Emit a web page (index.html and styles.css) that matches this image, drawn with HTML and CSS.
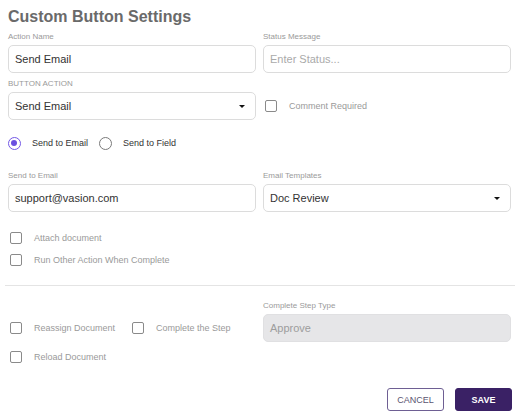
FILE: index.html
```html
<!DOCTYPE html>
<html>
<head>
<meta charset="utf-8">
<link rel="stylesheet" href="styles.css">
</head>
<body>
<div class="page">
  <h1 class="title">Custom Button Settings</h1>

  <div class="row row-first">
    <div class="field">
      <div class="label">Action Name</div>
      <div class="input">Send Email</div>
    </div>
    <div class="field">
      <div class="label">Status Message</div>
      <div class="input placeholder">Enter Status...</div>
    </div>
  </div>

  <div class="row row-second">
    <div class="field">
      <div class="label">BUTTON ACTION</div>
      <div class="input select">Send Email<span class="caret"></span></div>
    </div>
    <div class="field field-offset">
      <div class="check-line">
        <span class="box"></span><span class="check-text">Comment Required</span>
      </div>
    </div>
  </div>

  <div class="radios">
    <span class="radio on"></span><span class="radio-text">Send to Email</span>
    <span class="radio"></span><span class="radio-text">Send to Field</span>
  </div>

  <div class="row row-third">
    <div class="field">
      <div class="label">Send to Email</div>
      <div class="input">support@vasion.com</div>
    </div>
    <div class="field">
      <div class="label">Email Templates</div>
      <div class="input select">Doc Review<span class="caret"></span></div>
    </div>
  </div>

  <div class="checks">
    <div class="check-row"><span class="box"></span><span class="check-text">Attach document</span></div>
    <div class="check-row"><span class="box"></span><span class="check-text">Run Other Action When Complete</span></div>
  </div>

  <div class="divider"></div>

  <div class="row row-bottom">
    <div class="bottom-left">
      <div class="check-row">
        <span class="box"></span><span class="check-text">Reassign Document</span>
        <span class="box box-gap"></span><span class="check-text">Complete the Step</span>
      </div>
      <div class="check-row reload"><span class="box"></span><span class="check-text">Reload Document</span></div>
    </div>
    <div class="field">
      <div class="label">Complete Step Type</div>
      <div class="input disabled">Approve</div>
    </div>
  </div>

  <div class="actions">
    <button class="btn btn-cancel">CANCEL</button>
    <button class="btn btn-save">SAVE</button>
  </div>
</div>
</body>
</html>
```

FILE: styles.css
```css
* { box-sizing: border-box; }
html, body { margin: 0; padding: 0; background: #fff; }
body { font-family: "Liberation Sans", Arial, sans-serif; color: #333; }

.page {
  width: 520px;
  height: 417px;
  padding: 7px 9px 0 8px;
}

.title {
  margin: 0;
  font-size: 16px;
  line-height: 20px;
  font-weight: bold;
  color: #6a6a6a;
}

.row {
  display: grid;
  grid-template-columns: 248px 248px;
  column-gap: 7px;
}
.row-first { margin-top: 5px; }
.row-second { margin-top: 6px; }
.row-third { margin-top: 21px; }

.label {
  font-size: 8px;
  line-height: 10px;
  color: #9a9a9a;
  margin-bottom: 3px;
}

.input {
  height: 28px;
  border: 1px solid #dcdcdc;
  border-radius: 5px;
  padding: 0 6px;
  font-size: 11px;
  line-height: 26px;
  color: #333;
  position: relative;
}
.placeholder { color: #aaa; }
.disabled { background: #e6e6e8; color: #9d9d9d; border-color: #e0e0e2; }

.caret {
  position: absolute;
  right: 10px;
  top: 12px;
  width: 0;
  height: 0;
  border-left: 3px solid transparent;
  border-right: 3px solid transparent;
  border-top: 3px solid #111;
}

.field-offset { padding-top: 13px; }
.check-line {
  height: 28px;
  display: flex;
  align-items: center;
  padding-left: 2px;
}

.box {
  display: inline-block;
  width: 12px;
  height: 12px;
  border: 1.5px solid #8a8a8a;
  border-radius: 2px;
  flex: none;
}
.check-text {
  font-size: 9px;
  color: #9a9a9a;
  margin-left: 12px;
}

.radios {
  margin-top: 16px;
  height: 14px;
  display: flex;
  align-items: center;
}
.radio {
  width: 13px;
  height: 13px;
  border-radius: 50%;
  border: 1px solid #7a7a7a;
  flex: none;
  position: relative;
}
.radio.on { border: 1.5px solid #7358e6; }
.radio.on::after {
  content: "";
  position: absolute;
  left: 2px;
  top: 2px;
  width: 6px;
  height: 6px;
  border-radius: 50%;
  background: #6a4fe0;
}
.radio-text {
  font-size: 9px;
  color: #333;
  margin-left: 11px;
  margin-right: 11px;
}

.checks { margin-top: 19px; }
.check-row {
  height: 14px;
  display: flex;
  align-items: center;
  padding-left: 2px;
}
.checks .check-row + .check-row { margin-top: 8px; }

.divider {
  margin: 18px -4px 0 -3px;
  height: 1px;
  background: #e4e4e4;
}

.row-bottom { margin-top: 15px; }
.bottom-left { padding-top: 20px; }
.box-gap { margin-left: 17px; }
.reload { margin-top: 15px; }

.actions {
  margin-top: 24px;
  margin-right: -1px;
  display: flex;
  justify-content: flex-end;
  gap: 11px;
}
.btn {
  width: 57px;
  height: 23px;
  border-radius: 3px;
  font-family: "Liberation Sans", Arial, sans-serif;
  font-size: 9px;
  padding: 0;
  cursor: pointer;
}
.btn-cancel {
  background: #fff;
  border: 1px solid #6e5f93;
  color: #5a5470;
}
.btn-save {
  background: #3a2165;
  border: 1px solid #3a2165;
  color: #fff;
  font-weight: bold;
}
```
